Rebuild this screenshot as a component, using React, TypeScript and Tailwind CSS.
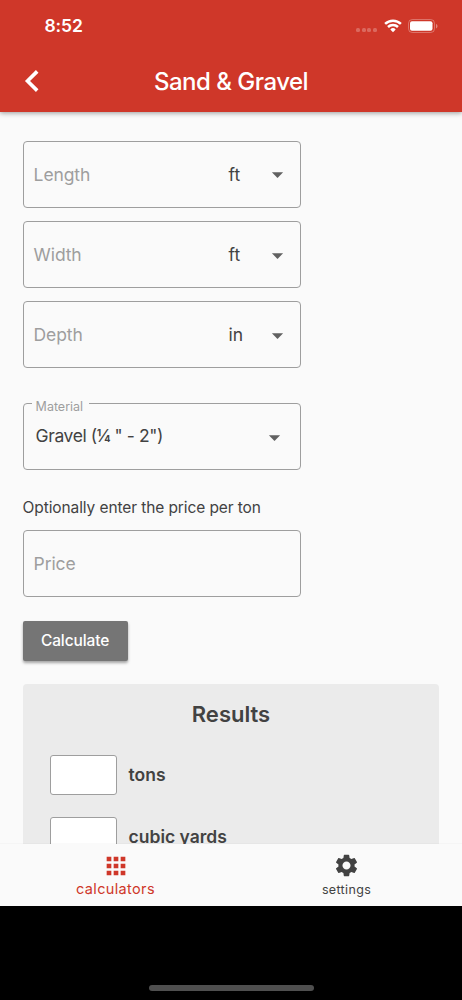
import { MdApps, MdArrowDropDown, MdSettings } from 'react-icons/md';

const DIMENSIONS = [
  { id: 'length', label: 'Length', unit: 'ft' },
  { id: 'width', label: 'Width', unit: 'ft' },
  { id: 'depth', label: 'Depth', unit: 'in' },
];

const RESULTS = ['tons', 'cubic yards'];

function StatusBar() {
  return (
    <div className="flex h-[52px] items-center justify-between pl-[44.5px] pr-[24px]">
      <span className="text-[17.5px] font-semibold leading-none tracking-[-0.1px]">8:52</span>
      <div className="flex items-center">
        <div className="mr-[6.5px] mt-[8px] flex gap-[1.7px]">
          {[0, 1, 2, 3].map(i => (
            <span key={i} className="size-[4px] rounded-[1.5px] bg-white/25" />
          ))}
        </div>
        <svg className="mr-[6.5px]" width="18" height="14" viewBox="0 0 18 14" fill="none" stroke="white" strokeWidth="2.5">
          <path d="M1.1 4.9a11.3 11.3 0 0 1 15.8 0" />
          <path d="M4 8a7.2 7.2 0 0 1 10 0" />
          <path d="M6.3 10.4a3.9 3.9 0 0 1 5.4 0L9 13.3z" fill="white" stroke="none" />
        </svg>
        <svg width="30" height="14" viewBox="0 0 30 14">
          <rect x="0.5" y="0.5" width="26" height="13" rx="3.8" fill="none" stroke="white" strokeOpacity="0.3" />
          <rect x="2" y="2.3" width="22.5" height="9.4" rx="2" fill="white" />
          <path d="M28 5v4.4c.9-.4 1.5-1.2 1.5-2.2S28.9 5.4 28 5z" fill="white" fillOpacity="0.4" />
        </svg>
      </div>
    </div>
  );
}

function Header() {
  return (
    <header className="relative z-10 h-[111.5px] shrink-0 bg-[#cf3729] text-white shadow-[0_1px_5px_rgba(0,0,0,0.4)]">
      <StatusBar />
      <div className="grid h-[59px] grid-cols-[60px_1fr_60px] items-center">
        <button className="-mt-[2px] pl-[24px]">
          <svg width="15" height="22" viewBox="0 0 15 22" fill="none" stroke="white" strokeWidth="3.6">
            <path d="M13.2 1.4 3.5 11l9.7 9.6" />
          </svg>
        </button>
        <h1 className="text-center text-[24px] font-medium tracking-[-0.5px]">Sand &amp; Gravel</h1>
      </div>
    </header>
  );
}

function DimensionField({ label, unit }: { label: string; unit: string }) {
  return (
    <div className="flex h-[67px] w-[278px] items-center rounded-[4px] border border-[#9e9e9e] pl-[10px] pt-[1.5px] text-[17.5px]">
      <span className="w-[195px] tracking-[-0.1px] text-[#9e9e9e]">{label}</span>
      <span className="w-[35px] text-[#424242]">{unit}</span>
      <MdArrowDropDown className="text-[#616161]" size={27} />
    </div>
  );
}

function NavBar() {
  return (
    <nav className="relative z-10 grid h-[62.5px] shrink-0 grid-cols-2 bg-[#fafafa] shadow-[0_-1px_1px_rgba(0,0,0,0.02)]">
      <button className="flex flex-col items-center pt-[8px] text-[#cf3729]">
        <MdApps size={28} />
        <span className="text-[14.5px] leading-[18px] tracking-[0.35px]">calculators</span>
      </button>
      <button className="flex flex-col items-center pt-[8.5px] text-[#424242]">
        <MdSettings size={27} />
        <span className="mt-[1.5px] text-[12.5px] leading-[18px] tracking-[0.35px]">settings</span>
      </button>
    </nav>
  );
}

export default function App() {
  return (
    <div className="flex h-[1000px] w-[462px] flex-col overflow-hidden bg-black font-['Inter',sans-serif]">
      <Header />

      <main className="min-h-0 flex-1 overflow-hidden bg-[#fafafa] px-[22.6px] pt-[29px] text-[#424242]">
        <div className="flex flex-col gap-[13.4px]">
          {DIMENSIONS.map(d => (
            <DimensionField key={d.id} label={d.label} unit={d.unit} />
          ))}
        </div>

        {/* Material select */}
        <div className="relative mt-[35px] flex h-[67px] w-[278px] items-center justify-between rounded-[4px] border border-[#9e9e9e] pl-[12px] pr-[12px]">
          <span className="absolute -top-[6px] left-[8px] bg-[#fafafa] pl-[4px] pr-[6px] text-[12.5px] leading-[18px] text-[#9e9e9e]">
            Material
          </span>
          <span className="-mt-[2px] text-[17.5px] tracking-[-0.4px]">
            Gravel (¼<span className="ml-[4px]">" - 2")</span>
          </span>
          <MdArrowDropDown className="mt-[2px] text-[#616161]" size={27} />
        </div>

        <p className="mt-[28px] text-[15.5px] leading-[20px] tracking-[-0.1px]">Optionally enter the price per ton</p>
        <div className="mt-[12px] flex h-[67px] w-[278px] items-center rounded-[4px] border border-[#9e9e9e] pl-[10px] pt-px text-[17.5px] tracking-[-0.1px] text-[#9e9e9e]">
          Price
        </div>

        <button className="mt-[23.5px] flex h-[40px] w-[105px] items-center justify-center rounded-[2px] bg-[#757575] text-[15.5px] font-medium tracking-[-0.1px] text-white shadow-[0_2px_3px_rgba(0,0,0,0.35)]">
          Calculate
        </button>

        <section className="mt-[23px] h-[300px] rounded-[4px] bg-[#ebebeb] pl-[27.5px] pt-[16px]">
          <h2 className="pr-[27.5px] text-center text-[22px] font-semibold leading-[28px]">Results</h2>
          <div className="mt-[27.5px] flex flex-col gap-[22px]">
            {RESULTS.map(r => (
              <div key={r} className="flex items-center">
                <div className="h-[39.5px] w-[67px] rounded-[3px] border border-[#9e9e9e] bg-white" />
                <span className="ml-[11.5px] mt-[1px] text-[17.5px] font-semibold">{r}</span>
              </div>
            ))}
          </div>
        </section>
      </main>

      <NavBar />
      <div className="flex h-[94px] shrink-0 items-end justify-center pb-[9px]">
        <div className="h-[6px] w-[165px] rounded-full bg-[#4f4f4f]" />
      </div>
    </div>
  );
}
